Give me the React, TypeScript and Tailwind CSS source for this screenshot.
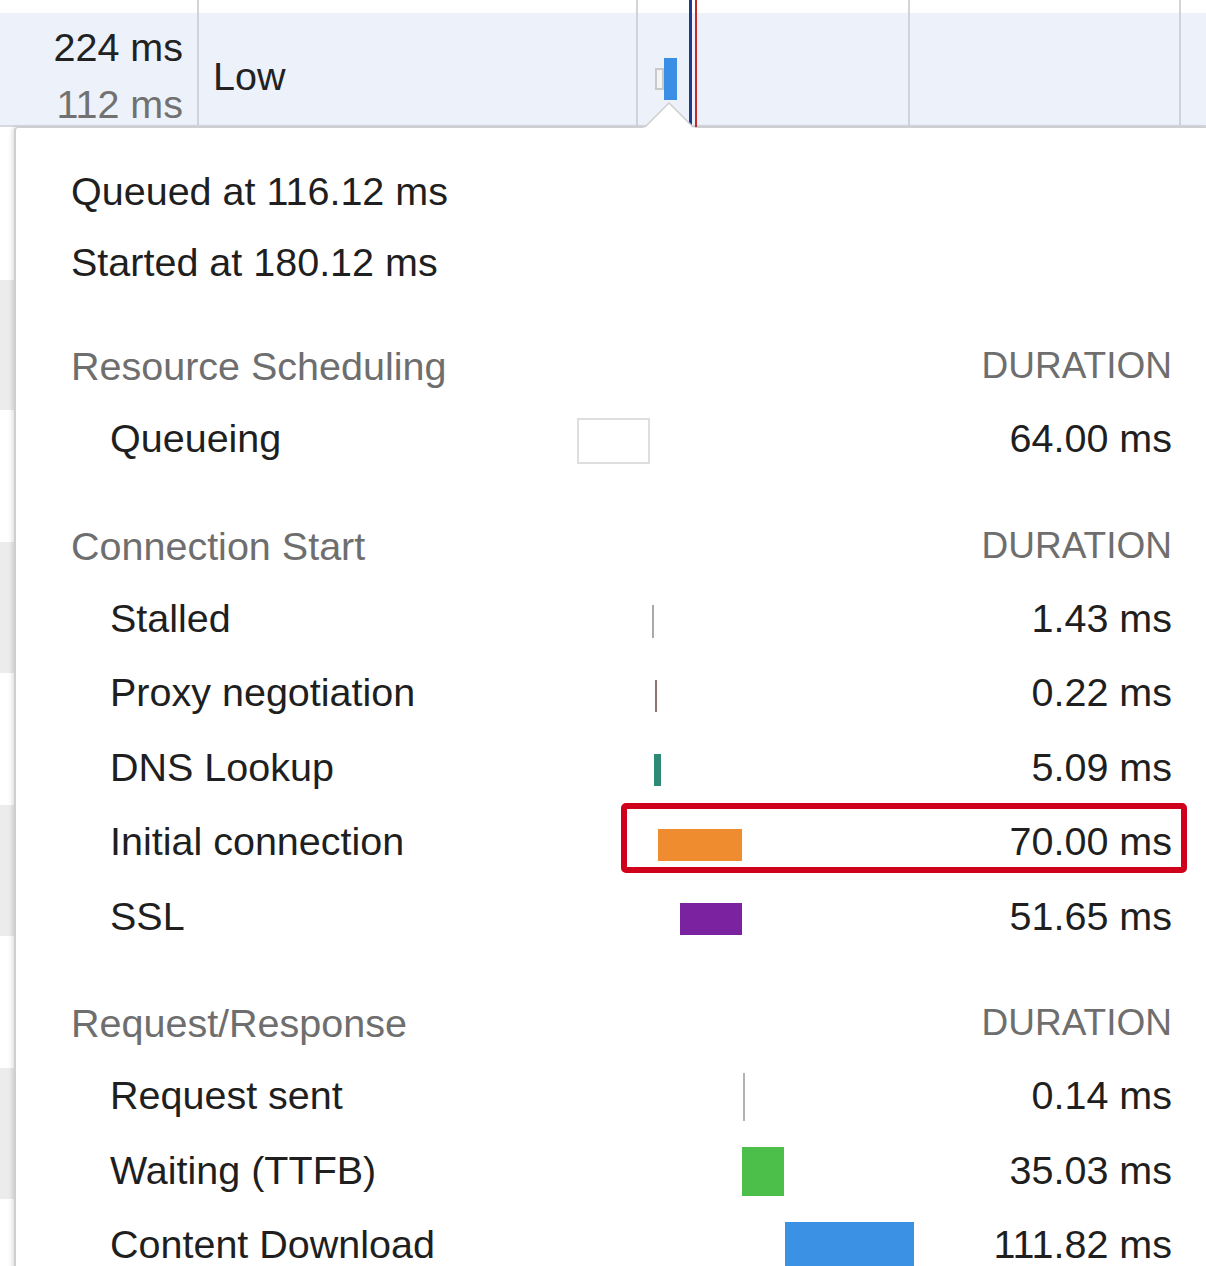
import React from "react";

type Bar = { left: number; width: number; height: number; color?: string; dy: number; box?: boolean };
type Row = { label: string; value: string; bar: Bar; highlight?: boolean };
type Section = { title: string; rows: Row[]; mt: string };

const sections: Section[] = [
  {
    title: "Resource Scheduling",
    mt: "mt-[33.5px]",
    rows: [{ label: "Queueing", value: "64.00 ms", bar: { left: 0, width: 73, height: 46, dy: 2.5, box: true } }],
  },
  {
    title: "Connection Start",
    mt: "mt-[35px]",
    rows: [
      { label: "Stalled", value: "1.43 ms", bar: { left: 75, width: 2, height: 33, color: "#a9a9a9", dy: 3.5 } },
      { label: "Proxy negotiation", value: "0.22 ms", bar: { left: 78, width: 2, height: 32, color: "#8e7272", dy: 3.5 } },
      { label: "DNS Lookup", value: "5.09 ms", bar: { left: 77, width: 7, height: 32, color: "#2e8a75", dy: 3.5 } },
      { label: "Initial connection", value: "70.00 ms", bar: { left: 81, width: 84, height: 32, color: "#ef8c2f", dy: 3.5 }, highlight: true },
      { label: "SSL", value: "51.65 ms", bar: { left: 103, width: 62, height: 32, color: "#7b22a1", dy: 3.5 } },
    ],
  },
  {
    title: "Request/Response",
    mt: "mt-[35px]",
    rows: [
      { label: "Request sent", value: "0.14 ms", bar: { left: 166, width: 2, height: 48, color: "#b2b2b2", dy: 1.5 } },
      { label: "Waiting (TTFB)", value: "35.03 ms", bar: { left: 165, width: 42, height: 49, color: "#4cbf4a", dy: 1.5 } },
      { label: "Content Download", value: "111.82 ms", bar: { left: 208, width: 129, height: 48, color: "#3b92e4", dy: 1.5 } },
    ],
  },
];

const stripes: { h: number; gray: boolean }[] = [
  { h: 153, gray: false },
  { h: 130, gray: true },
  { h: 132, gray: false },
  { h: 131, gray: true },
  { h: 132, gray: false },
  { h: 131, gray: true },
  { h: 132, gray: false },
  { h: 131, gray: true },
  { h: 200, gray: false },
];

function TimingRow({ row }: { row: Row }) {
  const b = row.bar;
  return (
    <div className="relative flex h-[74.5px] leading-[74.5px] text-[#1f1f1f]">
      <div className="w-[506px] pl-[39px] whitespace-nowrap">{row.label}</div>
      <div className="relative h-full w-[360px]">
        {b.box ? (
          <div
            className="absolute border-2 border-[#dedede] bg-white"
            style={{ left: b.left, width: b.width, height: b.height, top: `calc(50% - ${b.height / 2 - b.dy}px)` }}
          />
        ) : (
          <div
            className="absolute"
            style={{ left: b.left, width: b.width, height: b.height, background: b.color, top: `calc(50% - ${b.height / 2 - b.dy}px)` }}
          />
        )}
      </div>
      <div className="flex-1 text-right whitespace-nowrap">{row.value}</div>
      {row.highlight && (
        <div className="absolute left-[550px] top-[-1px] h-[70px] w-[566px] rounded-[5px] border-[6px] border-[#d0011b]" />
      )}
    </div>
  );
}

export default function App() {
  return (
    <div
      className="relative h-[1266px] w-[1206px] overflow-hidden bg-white text-[39.5px]"
      style={{ fontFamily: '"Liberation Sans", Arial, Helvetica, sans-serif' }}
    >
      {/* table top */}
      <div className="relative h-[127px]">
        <div className="flex h-[13px] bg-white">
          <div className="w-[199px] border-r-2 border-[#d4d4d4]" />
          <div className="w-[439px] border-r-2 border-[#d4d4d4]" />
          <div className="w-[272px] border-r-2 border-[#d4d4d4]" />
          <div className="w-[271px] border-r-2 border-[#d4d4d4]" />
          <div className="flex-1" />
        </div>
        <div className="flex h-[114px] border-b-2 border-[#d6d9e0] bg-[#edf1fa]">
          <div className="flex w-[199px] flex-col items-end border-r-2 border-[#d0d3da] pr-[14px] pt-[6px]">
            <div className="h-[57px] leading-[57px] text-[#222222]">224 ms</div>
            <div className="h-[57px] leading-[57px] text-[#717171]">112 ms</div>
          </div>
          <div className="w-[439px] border-r-2 border-[#d0d3da] pl-[14px] pt-[35px] leading-[57px] text-[#222222]">Low</div>
          <div className="relative w-[272px] border-r-2 border-[#d0d3da]">
            <div className="absolute left-[17px] top-[55px] h-[22px] w-[9px] border-2 border-[#c9c9c9] bg-[#f4f4f4]" />
            <div className="absolute left-[26px] top-[45px] h-[42px] w-[13px] bg-[#3a8ee6]" />
          </div>
          <div className="w-[271px] border-r-2 border-[#d0d3da]" />
          <div className="flex-1" />
        </div>
        {/* event lines */}
        <div className="absolute left-[689px] top-0 h-[127px] w-[3px] bg-[#1e3a8e]" />
        <div className="absolute left-[695px] top-0 h-[127px] w-[2px] bg-[#c62828]" />
      </div>

      {/* lower area */}
      <div className="flex">
        <div className="flex w-[14px] flex-col">
          {stripes.map((s, i) => (
            <div key={i} className={s.gray ? "bg-[#ececec]" : "bg-white"} style={{ height: s.h }} />
          ))}
        </div>
        <div className="relative flex-1 rounded-tl-[4px] border-l-2 border-t border-[#cfcfcf] bg-white pl-[55px] pr-[34px] pt-[27.5px] shadow-[-2px_0_4px_rgba(0,0,0,0.12)]">
          <div className="h-[71px] leading-[71px] text-[#1f1f1f]">Queued at 116.12 ms</div>
          <div className="h-[71px] leading-[71px] text-[#1f1f1f]">Started at 180.12 ms</div>
          {sections.map((sec) => (
            <div key={sec.title} className={sec.mt}>
              <div className="flex h-[70px] leading-[70px] text-[#6e6e6e]">
                <div className="flex-1 whitespace-nowrap">{sec.title}</div>
                <div className="text-[37px]">DURATION</div>
              </div>
              {sec.rows.map((r) => (
                <TimingRow key={r.label} row={r} />
              ))}
            </div>
          ))}
        </div>
      </div>

      {/* popover arrow */}
      <svg className="absolute left-[643px] top-[102px]" width="52" height="28" viewBox="0 0 52 28">
        <polygon points="1,26 26,1 51,26" fill="#ffffff" />
        <polyline points="1,26 26,1 51,26" fill="none" stroke="#cfcfcf" strokeWidth="1.5" />
        <rect x="0" y="25.5" width="52" height="3" fill="#ffffff" />
      </svg>
    </div>
  );
}
